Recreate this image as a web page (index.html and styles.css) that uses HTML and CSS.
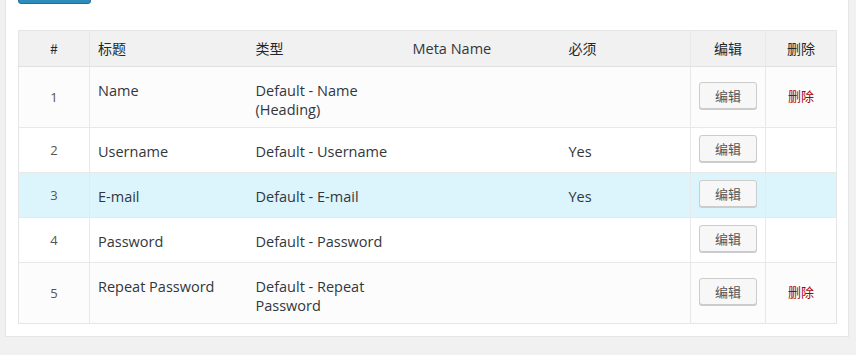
FILE: index.html
```html
<!DOCTYPE html>
<html lang="zh">
<head>
    <meta charset="UTF-8">
    <meta name="viewport" content="width=device-width, initial-scale=1.0">
    <title>字段列表</title>
    <link rel="stylesheet" href="styles.css">
</head>
<body>
    <div class="panel">
        <a href="#" class="button-primary"></a>

        <!-- Fields table -->
        <table class="fields">
            <colgroup>
                <col class="col-num">
                <col class="col-title">
                <col class="col-type">
                <col class="col-meta">
                <col class="col-req">
                <col class="col-edit">
                <col class="col-del">
            </colgroup>
            <thead>
                <tr>
                    <th class="num">#</th>
                    <th>标题</th>
                    <th>类型</th>
                    <th>Meta Name</th>
                    <th>必须</th>
                    <th class="action">编辑</th>
                    <th class="action">删除</th>
                </tr>
            </thead>
            <tbody>
                <tr class="alt">
                    <td class="num">1</td>
                    <td>Name</td>
                    <td>Default - Name<br>(Heading)</td>
                    <td></td>
                    <td></td>
                    <td class="action"><a href="#" class="button">编辑</a></td>
                    <td class="action"><a href="#" class="delete">删除</a></td>
                </tr>
                <tr>
                    <td class="num">2</td>
                    <td>Username</td>
                    <td>Default - Username</td>
                    <td></td>
                    <td>Yes</td>
                    <td class="action"><a href="#" class="button">编辑</a></td>
                    <td class="action"></td>
                </tr>
                <tr class="highlight">
                    <td class="num">3</td>
                    <td>E-mail</td>
                    <td>Default - E-mail</td>
                    <td></td>
                    <td>Yes</td>
                    <td class="action"><a href="#" class="button">编辑</a></td>
                    <td class="action"></td>
                </tr>
                <tr>
                    <td class="num">4</td>
                    <td>Password</td>
                    <td>Default - Password</td>
                    <td></td>
                    <td></td>
                    <td class="action"><a href="#" class="button">编辑</a></td>
                    <td class="action"></td>
                </tr>
                <tr class="alt">
                    <td class="num">5</td>
                    <td>Repeat Password</td>
                    <td>Default - Repeat<br>Password</td>
                    <td></td>
                    <td></td>
                    <td class="action"><a href="#" class="button">编辑</a></td>
                    <td class="action"><a href="#" class="delete">删除</a></td>
                </tr>
            </tbody>
        </table>
    </div>
</body>
</html>
```

FILE: styles.css
```css
* {
    margin: 0;
    padding: 0;
    box-sizing: border-box;
}

body {
    font-family: 'Open Sans', 'Noto Sans CJK SC', sans-serif;
    font-size: 14.5px;
    color: #32373c;
    background: #f1f1f1;
}

.panel {
    background: #fff;
    border: 1px solid #e5e5e5;
    box-shadow: 0 1px 1px rgba(0, 0, 0, 0.04);
    width: 844px;
    margin: -35px 0 0 5px;
    padding: 10px 12px 12px;
}

.button-primary {
    display: block;
    width: 73px;
    height: 28px;
    background: #2e8cbb;
    border: 1px solid #1f6f99;
    border-radius: 3px;
}

.fields {
    width: 818px;
    margin-top: 26px;
    border: 1px solid #e5e5e5;
    border-collapse: collapse;
    table-layout: fixed;
}

.col-num { width: 71px; }
.col-title { width: 158px; }
.col-type { width: 157px; }
.col-meta { width: 156px; }
.col-req { width: 130px; }
.col-edit { width: 75px; }
.col-del { width: 71px; }

th {
    background: #f1f1f1;
    font-family: 'Noto Sans CJK SC', 'Open Sans', sans-serif;
    font-weight: normal;
    font-size: 14px;
    line-height: 19px;
    color: #23282d;
    text-align: left;
    padding: 8px 8px;
    border-bottom: 1px solid #e1e1e1;
}

th:nth-child(4) {
    font-family: 'Open Sans', sans-serif;
    font-size: 14.5px;
    color: #32373c;
}

td {
    line-height: 19px;
    padding: 14px 8px 8px;
    vertical-align: top;
    border-top: 1px solid #e8e8e8;
}

tr.alt td {
    background: #fcfcfc;
}

tr.highlight td {
    background: #dcf4fc;
}

.num {
    text-align: center;
    border-right: 1px solid #e8e8e8;
}

td.num {
    font-size: 13px;
    color: #555;
    vertical-align: middle;
    padding: 8px;
}

.action {
    text-align: center;
    border-left: 1px solid #e8e8e8;
}

td.action {
    vertical-align: middle;
    padding: 7px 0 10px;
}

.button {
    display: inline-block;
    width: 58px;
    height: 27px;
    line-height: 25px;
    font-family: 'Noto Sans CJK SC', sans-serif;
    font-size: 13px;
    color: #555;
    text-decoration: none;
    background: #f7f7f7;
    border: 1px solid #ccc;
    border-radius: 3px;
    box-shadow: 0 1px 0 #ccc;
    vertical-align: middle;
}

.delete {
    font-family: 'Noto Sans CJK SC', sans-serif;
    font-size: 13px;
    color: #a00;
    text-decoration: none;
}
```
